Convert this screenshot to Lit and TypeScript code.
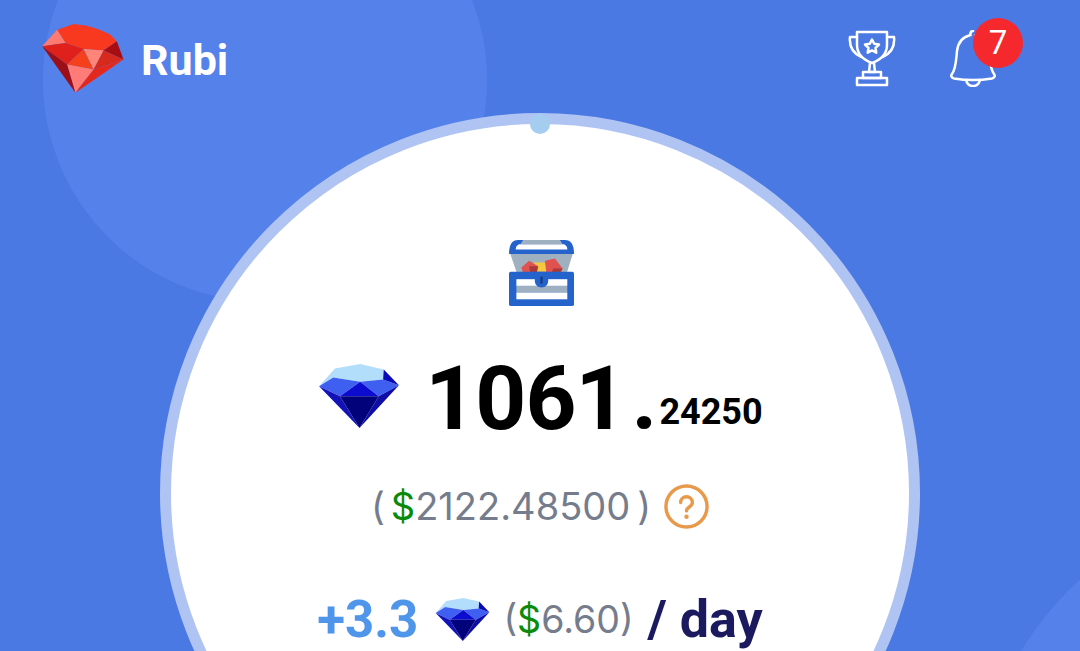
import { LitElement, css, html, svg } from 'lit'
import { customElement } from 'lit/decorators.js'

const sapphire = (cls: string) => html`
  <svg class=${cls} viewBox="28 42 237 190">
    <polygon points="28,108 75,55 150,42 220,58 218,88 150,95 70,82" fill="#b3defb" />
    <polygon points="28,108 70,82 150,95 90,138" fill="#3f5ff0" />
    <polygon points="150,95 218,88 265,105 205,138" fill="#3f5ff0" />
    <polygon points="150,95 205,138 90,138" fill="#0c0cd0" />
    <polygon points="220,58 265,105 218,88" fill="#0a0ab8" />
    <polygon points="28,108 90,138 148,232" fill="#1212b8" />
    <polygon points="265,105 205,138 148,232" fill="#0e0ea6" />
    <polygon points="90,138 205,138 148,232" fill="#02027a" />
  </svg>
`

const ruby = svg`
  <path d="M110 85L160 68Q220 72 270 100L290 120L250 148L190 143L135 125Z" fill="#f8391f" />
  <polygon points="65,135 110,85 135,125" fill="#ff7a70" />
  <polygon points="65,135 135,125 190,143 140,190" fill="#e0201a" />
  <polygon points="190,143 220,205 140,190" fill="#f5401e" />
  <polygon points="190,143 250,148 220,205" fill="#ff8578" />
  <polygon points="250,148 290,120 310,175" fill="#a80d14" />
  <polygon points="250,148 310,175 220,205" fill="#d62a1e" />
  <polygon points="140,190 220,205 165,275" fill="#ff7b78" />
  <polygon points="220,205 310,175 165,275" fill="#e5281d" />
  <polygon points="65,135 140,190 165,275" fill="#9c0f16" />
`

@customElement('app-root')
export class AppRoot extends LitElement {

  static styles = css`
    :host {
      display: block;
      position: relative;
      height: 651px;
      overflow: hidden;
      background: #4b79e4;
      font-family: 'Roboto', sans-serif;
    }

    .blob {
      position: absolute;
      border-radius: 50%;
      background: #5582ea;
    }

    .blob.one {
      left: 43px;
      top: -142px;
      width: 444px;
      height: 444px;
    }

    .blob.two {
      left: 972px;
      top: 492px;
      width: 666px;
      height: 666px;
    }

    .header {
      position: relative;
      display: flex;
      align-items: flex-start;
      height: 113px;
      box-sizing: border-box;
      padding: 22px 84px 0 41px;
    }

    .logo {
      width: 85px;
      height: 73px;
    }

    .brand {
      margin-left: 15px;
      margin-top: 11px;
      font-size: 43px;
      line-height: 54px;
      font-weight: 700;
      color: #fff;
    }

    .actions {
      display: flex;
      gap: 54px;
      margin-left: auto;
      padding-top: 8px;
    }

    .trophy {
      width: 48px;
      height: 57px;
    }

    .bell-wrap {
      position: relative;
      width: 46px;
      height: 57px;
    }

    .bell {
      width: 46px;
      height: 57px;
    }

    .badge {
      position: absolute;
      left: 23px;
      top: -12px;
      width: 50px;
      height: 50px;
      border-radius: 50%;
      background: #f5292d;
      color: #fff;
      font-size: 33px;
      line-height: 50px;
      text-align: center;
    }

    .dial {
      position: relative;
      display: flex;
      flex-direction: column;
      align-items: center;
      box-sizing: border-box;
      width: 760px;
      height: 760px;
      margin: 0 auto;
      padding-top: 116px;
      border: 11px solid #afc4f3;
      border-radius: 50%;
      background: #fff;
    }

    .dot {
      position: absolute;
      left: 50%;
      top: -10px;
      width: 20px;
      height: 20px;
      margin-left: -10px;
      border-radius: 50%;
      background: #a5cdf0;
    }

    .chest {
      width: 67px;
      height: 67px;
    }

    .balance {
      display: flex;
      align-items: flex-start;
      margin-top: 42px;
      margin-left: 2px;
      height: 100px;
    }

    .gem-big {
      width: 80px;
      height: 64px;
      margin-top: 15px;
      margin-right: 26px;
    }

    .amount {
      white-space: nowrap;
      font-size: 89px;
      line-height: 100px;
      font-weight: 700;
      letter-spacing: -1px;
      color: #000;
    }

    .point {
      margin-left: 6px;
    }

    .fraction {
      margin-left: 3px;
      font-size: 36px;
      line-height: 1;
      letter-spacing: 0;
      vertical-align: 5px;
    }

    .fiat {
      display: flex;
      align-items: center;
      margin-top: 34px;
      font-family: 'Inter', sans-serif;
      font-size: 38px;
      line-height: 46px;
      color: #757d8c;
    }

    .green {
      color: #0a8a0a;
    }

    .pad-l {
      margin-left: 6px;
    }

    .pad-r {
      margin-right: 7px;
    }

    .help {
      width: 45px;
      height: 45px;
      margin-left: 13px;
    }

    .rate {
      display: flex;
      align-items: center;
      margin-top: 60px;
      height: 60px;
    }

    .plus {
      font-size: 51px;
      font-weight: 700;
      color: #4f95ea;
    }

    .gem-small {
      width: 55px;
      height: 43px;
      margin: 0 13px 0 17px;
    }

    .rate-fiat {
      font-family: 'Inter', sans-serif;
      font-size: 37.5px;
      color: #757d8c;
    }

    .per {
      margin-left: 14px;
      font-size: 52px;
      font-weight: 700;
      color: #1c1a5e;
    }
  `

  render () {
    return html`
      <div class="blob one"></div>
      <div class="blob two"></div>
      <div class="header">
        <svg class="logo" viewBox="62 62 255 220">${ruby}</svg>
        <div class="brand">Rubi</div>
        <div class="actions">
          ${this.__renderTrophy()}
          <div class="bell-wrap">
            ${this.__renderBell()}
            <div class="badge">7</div>
          </div>
        </div>
      </div>
      <div class="dial">
        <div class="dot"></div>
        ${this.__renderChest()}
        <div class="balance">
          ${sapphire('gem-big')}
          <div class="amount">1061<span class="point">.</span><span class="fraction">24250</span></div>
        </div>
        <div class="fiat">
          <span>(<span class="green pad-l">$</span><span class="pad-r">2122.48500</span>)</span>
          <svg class="help" viewBox="0 0 46 46" fill="none" stroke="#e8994a">
            <circle cx="23" cy="23" r="21" stroke-width="3.5" />
            <path d="M17 19c0-3.500 2.500-6 6-6s6 2.500 6 6c0 4.500-6 4.500-6 8.500" stroke-width="3.500" stroke-linecap="round" />
            <circle cx="23" cy="33.500" r="1.500" stroke-width="1.500" fill="#e8994a" />
          </svg>
        </div>
        <div class="rate">
          <span class="plus">+3.3</span>
          ${sapphire('gem-small')}
          <span class="rate-fiat">(<span class="green">$</span>6.60)</span>
          <span class="per">/ day</span>
        </div>
      </div>
    `
  }

  __renderTrophy () {
    return html`
      <svg class="trophy" viewBox="0 0 48 57" fill="none" stroke="#fff" stroke-width="2.5" stroke-linejoin="round" stroke-linecap="round">
        <path d="M9 2h30v13c0 9-7 15-15 18-8-3-15-9-15-18z" />
        <path d="M9 7H2c-1 9 3 16 11 20" />
        <path d="M39 7h7c1 9-3 16-11 20" />
        <path d="M22 33l-1 9h6l-1-9" />
        <path d="M15 42h18v6H15z" />
        <path d="M9 48h30v7H9z" />
        <path d="M24 9.500l2.200 4.300 4.800 .7-3.500 3.400 .8 4.800-4.300-2.300-4.300 2.300 .8-4.800-3.500-3.400 4.800-.7z" />
      </svg>
    `
  }

  __renderBell () {
    return html`
      <svg class="bell" viewBox="0 0 46 57" fill="none" stroke="#fff" stroke-width="2.500" stroke-linejoin="round" stroke-linecap="round">
        <path d="M23 1c-2 0-3 2-2.500 4C12 7 8 13 7 21c-1 10-1 18-5 23-1.500 2-.5 4 2 4.500 12 2 26 2 38 0 2.500-.5 3.500-2.500 2-4.500-4-5-4-13-5-23-1-8-5-14-13.500-16" />
        <path d="M16 50c1 4 4 6 7 6s6-2 7-6" />
      </svg>
    `
  }

  __renderChest () {
    return html`
      <svg class="chest" viewBox="52 420 200 200">
        <path d="M85 420h140c17 0 27 12 27 42H58c0-30 10-42 27-42z" fill="#2463cc" />
        <path d="M78 448c0-9 6-15 14-15h126c8 0 14 6 14 15z" fill="#fff" />
        <path d="M100 420h110l8 13H92z" fill="#9fb0c0" />
        <polygon points="62,462 248,462 230,520 82,520" fill="#9fb0c0" />
        <polygon points="125,495 135,487 170,487 190,495 195,520 125,520" fill="#f5c842" />
        <polygon points="95,502 118,482 145,498 140,520 100,520" fill="#e0524f" />
        <polygon points="118,498 145,498 140,520 122,520" fill="#a83a3a" />
        <polygon points="165,482 195,475 218,505 210,520 170,520" fill="#e0524f" />
        <polygon points="190,505 218,505 210,520 185,520" fill="#a83a3a" />
        <rect x="58" y="515" width="194" height="102" rx="5" fill="#2463cc" />
        <rect x="80" y="537" width="152" height="20" fill="#fff" />
        <rect x="80" y="557" width="152" height="20" fill="#9fb0c0" />
        <rect x="80" y="577" width="152" height="20" fill="#fff" />
        <path d="M135 515h40v27c0 12-9 20-20 20s-20-8-20-20z" fill="#2463cc" />
        <path d="M151 530h8l-1 10 1 10h-8l1-10z" fill="#123a80" />
      </svg>
    `
  }
}
